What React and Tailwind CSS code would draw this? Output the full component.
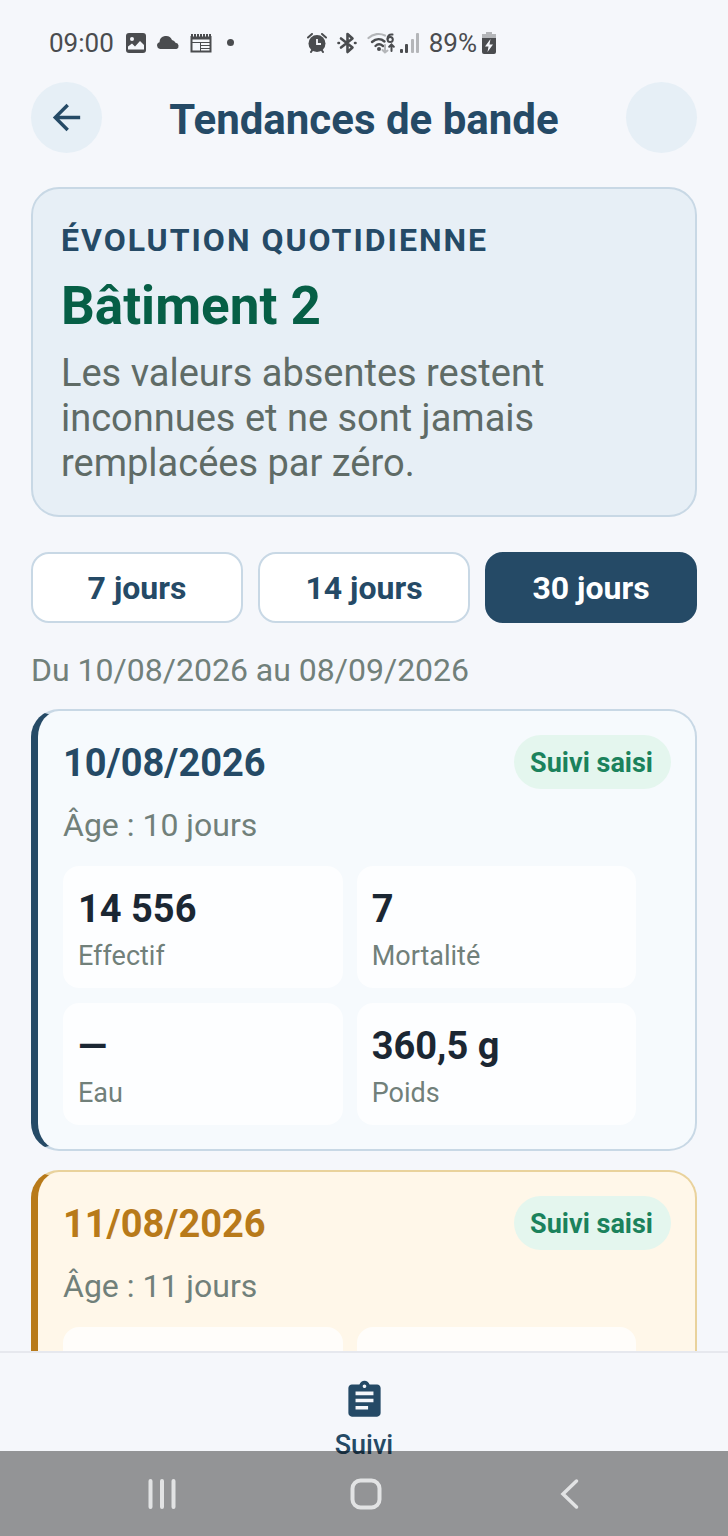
import { useState } from "react";
import { MdArrowBack, MdAssignment } from "react-icons/md";

const PERIODS = [7, 14, 30];

const DAYS = [
  {
    date: "10/08/2026",
    age: 10,
    status: "Suivi saisi",
    tone: "normal",
    metrics: [
      { label: "Effectif", value: "14 556" },
      { label: "Mortalité", value: "7" },
      { label: "Eau", value: "—" },
      { label: "Poids", value: "360,5 g" },
    ],
  },
  {
    date: "11/08/2026",
    age: 11,
    status: "Suivi saisi",
    tone: "warning",
    metrics: null,
  },
];

const TONES = {
  normal: {
    card: "border-[#c8d8e5] border-l-[#254a66] bg-[#f6fafd]",
    date: "text-[#254a66]",
  },
  warning: {
    card: "border-[#e9d29c] border-l-[#b87a1a] bg-[#fff7e9]",
    date: "text-[#b87a1a]",
  },
};

function StatusBar() {
  return (
    <div className="flex h-[82px] shrink-0 items-center pt-[3px] pl-[49px] text-[26px] leading-8 text-[#4a4c4f]">
      <span>09:00</span>
      <div className="ml-3 flex items-center gap-[10px]">
        {/* Picture */}
        <svg className="h-5 w-5" viewBox="0 0 20 20">
          <rect width="20" height="20" rx="3" fill="currentColor" />
          <circle cx="6" cy="6" r="2" fill="#f5f7fb" />
          <path d="M2 16.500v-3l4-3 3 3 5-5.500 4 4v4.500z" fill="#f5f7fb" />
        </svg>
        {/* Cloud */}
        <svg className="h-5 w-6" viewBox="0 0 24 20">
          <path d="M4 16a3.500 3.500 0 0 1-.5-6.800A6.500 6.500 0 0 1 16 7a4.500 4.500 0 0 1 3.500 2.800A3.200 3.200 0 0 1 20.500 16z" fill="currentColor" />
        </svg>
        {/* News */}
        <svg className="h-5 w-[22px]" viewBox="0 0 22 20" fill="none" stroke="currentColor">
          <path d="M1.500 3v15.500h19V3" strokeWidth="2" />
          <path d="M1 2.500h20" strokeWidth="3" strokeDasharray="2 1" />
          <path d="M1 5h20" strokeWidth="3" />
          <path d="M2 9.500h18M10.500 9v9" strokeWidth="1" />
          <path d="M11 12.500h9M11 15.500h9" strokeWidth="1" />
        </svg>
      </div>
      <span className="ml-[15px] h-[7px] w-[7px] rounded-full bg-[#4a4c4f]" />
      <div className="ml-[73px] flex items-center gap-[10px]">
        {/* Alarm */}
        <svg className="h-5 w-5" viewBox="0 0 20 20" fill="none" stroke="currentColor">
          <circle cx="10" cy="10.500" r="8.500" fill="currentColor" stroke="none" />
          <path d="M1 4.500 5 1M19 4.500 15 1M4 19l2-3M16 19l-2-3" strokeWidth="2" strokeLinecap="round" />
          <path d="M10 6v5h4" stroke="#f5f7fb" strokeWidth="1.800" />
        </svg>
        {/* Bluetooth */}
        <svg className="h-[22px] w-5" viewBox="0 0 20 22" fill="none" stroke="currentColor" strokeWidth="2.600" strokeLinejoin="round" strokeLinecap="round">
          <path d="M4 6.500 15.500 15.500 10.500 20V2l5 4.500L4 15.500" />
          <path d="M1.500 11h.5M18 11h.5" />
        </svg>
        {/* Wi-Fi */}
        <svg className="h-[22px] w-7" viewBox="0 0 28 22" fill="none" stroke="currentColor" strokeLinecap="round">
          <path d="M1.500 6C6 1.500 13 1 18 3.500" stroke="#b4b6b9" strokeWidth="2.200" />
          <path d="M5 10c4-3.500 9-3.500 12.500-.5M8.500 14c2-2 5-2 7.500 0" strokeWidth="2.400" />
          <circle cx="12" cy="17" r="2" fill="currentColor" stroke="none" />
          <path d="M25.500 2.500C22 2 20.500 4 20.500 7" strokeWidth="2" />
          <circle cx="23.200" cy="7.500" r="2.600" strokeWidth="2" />
          <path d="M18 13v7m-2.500-2 2.500 2.500 2.500-2" stroke="#b4b6b9" strokeWidth="2" />
          <path d="M24.500 19v-6m-2.300 1.800 2.300-2.300 2.300 2.300" strokeWidth="2" />
        </svg>
      </div>
      {/* Signal */}
      <svg className="ml-[5px] h-5 w-5" viewBox="0 0 20 20" fill="currentColor">
        <rect x="0" y="16" width="3" height="4" rx="1" />
        <rect x="5" y="11" width="3" height="9" rx="1" />
        <rect x="11" y="6" width="3" height="14" rx="1" fill="#b4b6b9" />
        <rect x="16" y="0" width="3" height="20" rx="1" fill="#b4b6b9" />
      </svg>
      <span className="ml-[9px]">89%</span>
      {/* Battery */}
      <svg className="ml-[5px] h-[22px] w-[14px]" viewBox="0 0 14 22">
        <path d="M4 0h6v2h4v5H0V2h4z" fill="#b4b6b9" />
        <path d="M0 6h14v14a2 2 0 0 1-2 2H2a2 2 0 0 1-2-2z" fill="currentColor" />
        <path d="M8.500 7 3 14.500h3.500L5.500 20 11 12.500H7.500z" fill="#f5f7fb" />
      </svg>
    </div>
  );
}

function Metrics({ metrics }) {
  if (!metrics) {
    return (
      <div aria-hidden="true" className="mt-[22px] flex flex-wrap gap-x-[14px] gap-y-[15px]">
        {[0, 1, 2, 3].map((i) => (
          <div key={i} className="h-[122px] w-[46%] rounded-2xl bg-white/75" />
        ))}
      </div>
    );
  }

  return (
    <dl className="mt-[22px] flex flex-wrap gap-x-[14px] gap-y-[15px]">
      {metrics.map((metric) => (
        <div key={metric.label} className="flex w-[46%] flex-col-reverse rounded-2xl bg-white/75 px-[15px] py-4">
          <dt className="mt-1 text-[27px] leading-8 text-[#71807a]">{metric.label}</dt>
          <dd className="text-[38px] leading-[54px] font-bold text-[#1b2733]">{metric.value}</dd>
        </div>
      ))}
    </dl>
  );
}

function DayCard({ day }) {
  const tone = TONES[day.tone];

  return (
    <article className={`rounded-[28px] border-2 border-l-[7px] py-6 pr-6 pl-[25px] ${tone.card}`}>
      <div className="flex items-center justify-between">
        <h3 className={`pt-[2px] text-[38px] leading-[44px] font-bold ${tone.date}`}>{day.date}</h3>
        <span className="rounded-full bg-[#e4f6ee] pt-3 pr-[18px] pb-[10px] pl-4 text-[27px] leading-8 font-bold text-[#1b825c]">
          {day.status}
        </span>
      </div>
      <p className="mt-[17px] text-[32px] leading-[38px] text-[#71807a]">Âge : {day.age} jours</p>
      <Metrics metrics={day.metrics} />
    </article>
  );
}

function SystemNav() {
  return (
    <div className="absolute inset-x-0 bottom-0 grid h-[85px] grid-cols-3 items-center bg-black/40 pr-14 pl-[60px] text-[#e2e3e4]">
      <button type="button" aria-label="Applications récentes" className="flex justify-center">
        <svg className="h-8 w-8" viewBox="0 0 32 32" stroke="currentColor" strokeWidth="4" strokeLinecap="round">
          <path d="M4.500 3v26M16 3v26M27.500 3v26" />
        </svg>
      </button>
      <button type="button" aria-label="Accueil" className="flex justify-center">
        <svg className="h-8 w-8" viewBox="0 0 32 32" fill="none" stroke="currentColor" strokeWidth="4">
          <rect x="2.500" y="2.500" width="27" height="27" rx="8" />
        </svg>
      </button>
      <button type="button" aria-label="Retour" className="flex justify-center">
        <svg className="h-8 w-8" viewBox="0 0 32 32" fill="none" stroke="currentColor" strokeWidth="3.500" strokeLinecap="round">
          <path d="M22.500 3 9 16l13.500 13" />
        </svg>
      </button>
    </div>
  );
}

export default function App() {
  const [period, setPeriod] = useState(30);

  return (
    <div className="relative flex h-screen flex-col overflow-hidden bg-[#f5f7fb] font-[Roboto,sans-serif]">
      <StatusBar />

      <header className="flex shrink-0 items-center justify-between px-[31px]">
        <button
          type="button"
          aria-label="Retour"
          className="flex h-[71px] w-[71px] items-center justify-center rounded-full bg-[#e6eff6] text-[#254a66]"
        >
          <MdArrowBack className="h-[41px] w-[41px]" />
        </button>
        <h1 className="pt-1 text-[42px] leading-[50px] font-bold text-[#254a66]">Tendances de bande</h1>
        <div className="h-[71px] w-[71px] rounded-full bg-[#e6eff6]" />
      </header>

      <main className="min-h-0 flex-1 overflow-y-auto px-[31px] pt-[34px] [scrollbar-width:none]">
        {/* Summary */}
        <section className="rounded-[28px] border-2 border-[#c8d8e5] bg-[#e7eff6] px-7 pt-8 pb-[29px]">
          <p className="text-[32px] leading-[38px] font-bold tracking-[2px] text-[#254a66] uppercase">
            Évolution quotidienne
          </p>
          <h2 className="mt-4 text-[53px] leading-[62px] font-bold text-[#065f46]">Bâtiment 2</h2>
          <p className="mt-[14px] text-[38px] leading-[45px] text-[#5f6b66]">
            Les valeurs absentes restent inconnues et ne sont jamais remplacées par zéro.
          </p>
        </section>

        {/* Period selector */}
        <div className="mt-[35px] grid grid-cols-3 gap-[15px]">
          {PERIODS.map((days) => (
            <button
              key={days}
              type="button"
              aria-pressed={period === days}
              onClick={() => setPeriod(days)}
              className={`h-[71px] rounded-[18px] border-2 text-[32px] leading-[38px] font-bold ${
                period === days
                  ? "border-[#254a66] bg-[#254a66] text-white"
                  : "border-[#c8d8e5] bg-white text-[#254a66]"
              }`}
            >
              {days} jours
            </button>
          ))}
        </div>

        <p className="mt-7 text-[32px] leading-[38px] text-[#71807a]">Du 10/08/2026 au 08/09/2026</p>

        <div className="mt-5 flex flex-col gap-[19px]">
          {DAYS.map((day) => (
            <DayCard key={day.date} day={day} />
          ))}
        </div>
      </main>

      <nav className="flex h-[185px] shrink-0 justify-center border-t-2 border-[#e6e8ee] bg-[#f5f7fb] pt-[26px]">
        <a href="#suivi" className="flex flex-col items-center text-[27px] leading-8 font-medium text-[#254a66]">
          <MdAssignment className="h-[43px] w-[43px]" />
          <span className="mt-[7px]">Suivi</span>
        </a>
      </nav>

      <SystemNav />
    </div>
  );
}
